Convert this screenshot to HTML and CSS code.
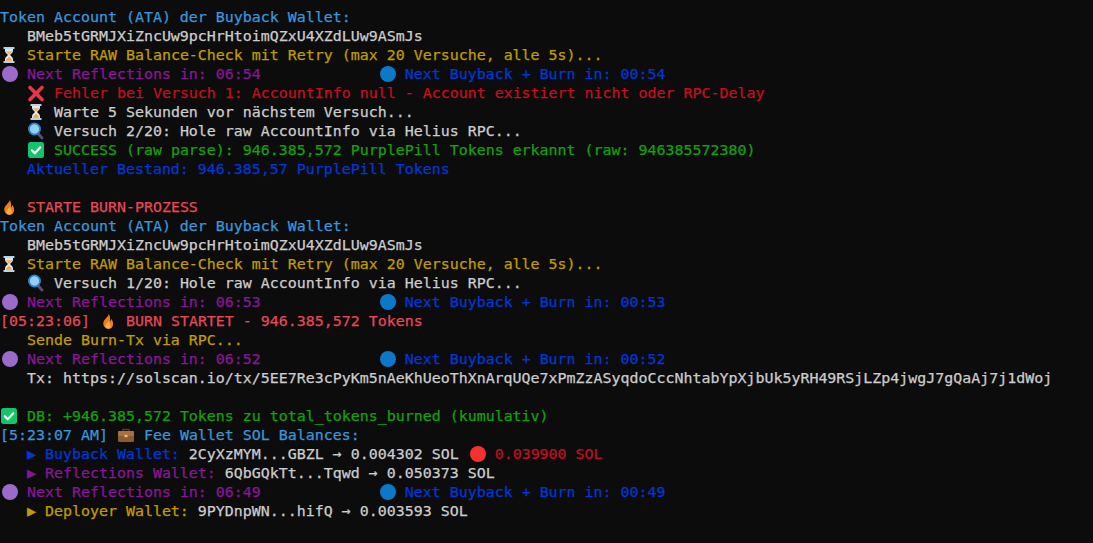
FILE: index.html
```html
<!DOCTYPE html>
<html lang="de">
<head>
<meta charset="utf-8">
<title>Terminal</title>
<link rel="stylesheet" href="styles.css">
</head>
<body>
<svg class="defs" width="0" height="0" aria-hidden="true">
  <symbol id="hourglass" viewBox="0 0 18 18">
    <path d="M5 2.500h8v2.200c0 2.200-2.400 3.100-2.900 4.300.5 1.200 2.900 2.100 2.900 4.300v2.200H5v-2.200c0-2.200 2.400-3.100 2.900-4.300C7.400 7.800 5 6.900 5 4.700z" fill="#dbeaf2"/>
    <path d="M6 5.200h6c-.4 1.400-2.100 2.200-2.600 3.400h-.8C8.100 7.400 6.400 6.600 6 5.200z" fill="#f6b255"/>
    <path d="M9 10.500c.4 1.300 2.700 2 3 4.200H6c.3-2.200 2.600-2.900 3-4.200z" fill="#f6a53c"/>
    <rect x="3.500" y="1" width="11" height="2" rx=".6" fill="#b9d3e2"/>
    <rect x="3.500" y="15" width="11" height="2" rx=".6" fill="#b9d3e2"/>
  </symbol>
  <symbol id="purple" viewBox="0 0 18 18"><circle cx="10" cy="9" r="8" fill="#9b6bc9"/></symbol>
  <symbol id="blue" viewBox="0 0 18 18"><circle cx="10" cy="9" r="8" fill="#0b78c9"/></symbol>
  <symbol id="red" viewBox="0 0 18 18"><circle cx="10" cy="9" r="8" fill="#f5312f"/></symbol>
  <symbol id="cross" viewBox="0 0 18 18"><path d="M3 3.500 15 15.500M15 3.500 3 15.500" stroke="#e8364a" stroke-width="3.600" stroke-linecap="round"/></symbol>
  <symbol id="glass" viewBox="0 0 18 18">
    <path d="M10.500 11l4.500 5" stroke="#5a4a78" stroke-width="3" stroke-linecap="round"/>
    <circle cx="7.500" cy="7" r="5.600" fill="#8fd0f5" stroke="#2f7fc4" stroke-width="1.800"/>
  </symbol>
  <symbol id="check" viewBox="0 0 18 18">
    <rect x="1" y="1" width="16" height="16" rx="2.500" fill="#13c46a"/>
    <path d="M4.800 9.300 7.800 12.300 13.300 6.300" fill="none" stroke="#fff" stroke-width="2.200" stroke-linecap="round" stroke-linejoin="round"/>
  </symbol>
  <symbol id="flame" viewBox="0 0 18 18">
    <path d="M9.800 1.500c.5 3-4.600 5-5.400 8.800C3.700 13.800 6 16.800 9.200 16.800c3.300 0 5.300-2.500 4.900-5.900-.2-1.600-1-2.900-1.800-3.800-.1 1.200-.6 1.900-1.200 2.300 .3-3-.4-5.900-1.300-7.900z" fill="#ee7a22"/>
    <path d="M9.200 8.500c.3 2-2.900 3.200-2.800 5.500.1 1.600 1.300 2.800 2.800 2.800 1.600 0 2.700-1.200 2.700-2.800 0-2.300-2-3.300-2.700-5.500z" fill="#fbb13c"/>
  </symbol>
  <symbol id="case" viewBox="0 0 18 18">
    <path d="M6 5V3.500h6V5" fill="none" stroke="#5a3b22" stroke-width="1.400"/>
    <rect x="1" y="5" width="16" height="11" rx="1.500" fill="#8a5a32"/>
    <rect x="1" y="5" width="16" height="5" rx="1" fill="#a86f3f"/>
    <rect x="7.500" y="8.800" width="3" height="2.400" fill="#e8c26a"/>
  </symbol>
</svg>
<main class="terminal">
  <div class="line cyan">Token Account (ATA) der Buyback Wallet:</div>
  <div class="line white">   BMeb5tGRMJXiZncUw9pcHrHtoimQZxU4XZdLUw9ASmJs</div>
  <div class="line yellow"><svg class="icon"><use href="#hourglass"/></svg> Starte RAW Balance-Check mit Retry (max 20 Versuche, alle 5s)...</div>
  <div class="line purple"><svg class="icon"><use href="#purple"/></svg> Next Reflections in: 06:54             <svg class="icon"><use href="#blue"/></svg> <span class="blue">Next Buyback + Burn in: 00:54</span></div>
  <div class="line red">   <svg class="icon"><use href="#cross"/></svg> Fehler bei Versuch 1: AccountInfo null - Account existiert nicht oder RPC-Delay</div>
  <div class="line white">   <svg class="icon"><use href="#hourglass"/></svg> Warte 5 Sekunden vor nächstem Versuch...</div>
  <div class="line white">   <svg class="icon"><use href="#glass"/></svg> Versuch 2/20: Hole raw AccountInfo via Helius RPC...</div>
  <div class="line green">   <svg class="icon"><use href="#check"/></svg> SUCCESS (raw parse): 946.385,572 PurplePill Tokens erkannt (raw: 946385572380)</div>
  <div class="line blue">   Aktueller Bestand: 946.385,57 PurplePill Tokens</div>
  <div class="line"></div>
  <div class="line bright-red"><svg class="icon"><use href="#flame"/></svg> STARTE BURN-PROZESS</div>
  <div class="line cyan">Token Account (ATA) der Buyback Wallet:</div>
  <div class="line white">   BMeb5tGRMJXiZncUw9pcHrHtoimQZxU4XZdLUw9ASmJs</div>
  <div class="line yellow"><svg class="icon"><use href="#hourglass"/></svg> Starte RAW Balance-Check mit Retry (max 20 Versuche, alle 5s)...</div>
  <div class="line white">   <svg class="icon"><use href="#glass"/></svg> Versuch 1/20: Hole raw AccountInfo via Helius RPC...</div>
  <div class="line purple"><svg class="icon"><use href="#purple"/></svg> Next Reflections in: 06:53             <svg class="icon"><use href="#blue"/></svg> <span class="blue">Next Buyback + Burn in: 00:53</span></div>
  <div class="line bright-red">[05:23:06] <svg class="icon"><use href="#flame"/></svg> BURN STARTET - 946.385,572 Tokens</div>
  <div class="line yellow">   Sende Burn-Tx via RPC...</div>
  <div class="line purple"><svg class="icon"><use href="#purple"/></svg> Next Reflections in: 06:52             <svg class="icon"><use href="#blue"/></svg> <span class="blue">Next Buyback + Burn in: 00:52</span></div>
  <div class="line white">   Tx: https://solscan.io/tx/5EE7Re3cPyKm5nAeKhUeoThXnArqUQe7xPmZzASyqdoCccNhtabYpXjbUk5yRH49RSjLZp4jwgJ7gQaAj7j1dWoj</div>
  <div class="line"></div>
  <div class="line green"><svg class="icon"><use href="#check"/></svg> DB: +946.385,572 Tokens zu total_tokens_burned (kumulativ)</div>
  <div class="line cyan">[5:23:07 AM] <svg class="icon"><use href="#case"/></svg> Fee Wallet SOL Balances:</div>
  <div class="line white">   <span class="blue">▶ Buyback Wallet:</span> 2CyXzMYM...GBZL → 0.004302 SOL <svg class="icon"><use href="#red"/></svg> <span class="red">0.039900 SOL</span></div>
  <div class="line white">   <span class="purple">▶ Reflections Wallet:</span> 6QbGQkTt...Tqwd → 0.050373 SOL</div>
  <div class="line purple"><svg class="icon"><use href="#purple"/></svg> Next Reflections in: 06:49             <svg class="icon"><use href="#blue"/></svg> <span class="blue">Next Buyback + Burn in: 00:49</span></div>
  <div class="line white">   <span class="yellow">▶ Deployer Wallet:</span> 9PYDnpWN...hifQ → 0.003593 SOL</div>
</main>
</body>
</html>
```
FILE: styles.css
```css
html, body {
  margin: 0;
  height: 100%;
  background: #0c0c0c;
}
.defs {
  position: absolute;
}
.terminal {
  padding-top: 8px;
  font-family: "DejaVu Sans Mono", "Liberation Mono", monospace;
  font-size: 14.95px;
  -webkit-text-stroke: 0.25px currentColor;
  color: #cccccc;
  overflow: hidden;
}
.line {
  height: 19px;
  line-height: 19px;
  white-space: pre;
}
.icon {
  width: 18px;
  height: 18px;
  vertical-align: -4px;
}
.white { color: #cccccc; }
.cyan { color: #3a96dd; }
.yellow { color: #c19c00; }
.purple { color: #881798; }
.blue { color: #0037da; }
.red { color: #c50f1f; }
.green { color: #13a10e; }
.bright-red { color: #e74856; }
```
